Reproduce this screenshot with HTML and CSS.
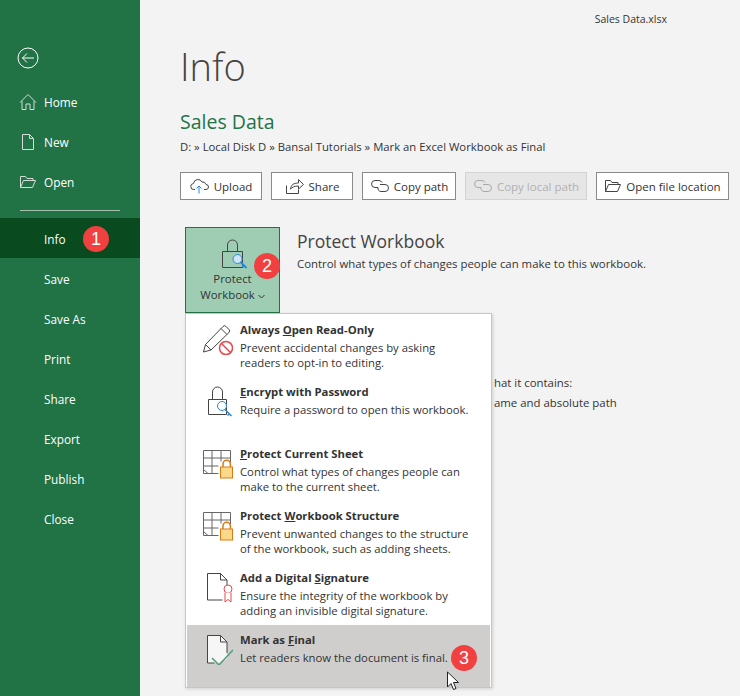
FILE: index.html
```html
<!DOCTYPE html>
<html lang="en">
<head>
<meta charset="utf-8">
<title>Sales Data.xlsx</title>
<link rel="stylesheet" href="styles.css">
</head>
<body>
<div class="app">
  <aside class="side">
    <div class="back">
      <svg width="22" height="22" viewBox="0 0 22 22" fill="none" stroke="#fff" stroke-width="1"><circle cx="11" cy="11" r="10"/><path d="M17 11H5.500M10 6.500 5.500 11l4.500 4.500"/></svg>
    </div>
    <nav class="nav-top">
      <a class="nav"><svg class="nav-ico" width="18" height="18" viewBox="0 0 18 18" fill="none" stroke="#d4ddd7"><path d="M1 9.500 9 1.500l8 8M3 8v8.500h4V11h4v5.500h4V8"/></svg>Home</a>
      <a class="nav"><svg class="nav-ico" width="18" height="18" viewBox="0 0 18 18" fill="none" stroke="#d4ddd7"><path d="M3.500 1.500h7l4 4v11h-11zM10.500 1.500v4h4"/></svg>New</a>
      <a class="nav"><svg class="nav-ico" width="18" height="18" viewBox="0 0 18 18" fill="none" stroke="#d4ddd7"><path d="M1.500 14.500v-11h5l1.500 2h6v2M1.500 14.500h12l3-7h-12z"/></svg>Open</a>
    </nav>
    <div class="sep"></div>
    <a class="nav nav-plain active">Info<span class="badge badge-1">1</span></a>
    <a class="nav nav-plain">Save</a>
    <a class="nav nav-plain">Save As</a>
    <a class="nav nav-plain">Print</a>
    <a class="nav nav-plain">Share</a>
    <a class="nav nav-plain">Export</a>
    <a class="nav nav-plain">Publish</a>
    <a class="nav nav-plain">Close</a>
  </aside>
  <main class="main">
    <div class="file-name">Sales Data.xlsx</div>
    <h1 class="title">Info</h1>
    <h2 class="doc">Sales Data</h2>
    <div class="path">D: » Local Disk D » Bansal Tutorials » Mark an Excel Workbook as Final</div>
    <div class="btns">
      <button class="btn w-upload"><svg width="20" height="16" viewBox="0 0 20 16" fill="none" stroke="#444"><path d="M5 11.500H4a3 3 0 0 1-.5-6 4.500 4.500 0 0 1 8.500-1.500 3.500 3.500 0 0 1 4 2.500 2.500 2.500 0 0 1 0 5h-2"/><path d="M9 15.500V8M6.500 10.500 9 8l2.500 2.500" stroke="#2b88d8"/></svg>Upload</button>
      <button class="btn w-share"><svg width="20" height="16" viewBox="0 0 20 16" fill="none" stroke="#444"><path d="M1.500 7.500v8h12v-4"/><path d="M5.500 11c.5-4 3-6 8-6V1.500l5 5-5 4.500V8c-4 0-6 1-8 3z"/></svg>Share</button>
      <button class="btn w-copy"><svg width="20" height="14" viewBox="0 0 20 14" fill="none" stroke="#444"><path d="M8 8.500H5a3.500 3.500 0 0 1 0-7h4a3.500 3.500 0 0 1 3 2M10 5.500h5a3.500 3.500 0 0 1 0 7h-4a3.500 3.500 0 0 1-3-4"/></svg>Copy path</button>
      <button class="btn w-local off"><svg width="20" height="14" viewBox="0 0 20 14" fill="none" stroke="#aaa"><path d="M8 8.500H5a3.500 3.500 0 0 1 0-7h4a3.500 3.500 0 0 1 3 2M10 5.500h5a3.500 3.500 0 0 1 0 7h-4a3.500 3.500 0 0 1-3-4"/></svg>Copy local path</button>
      <button class="btn w-open"><svg width="18" height="14" viewBox="0 0 18 14" fill="none" stroke="#444"><path d="M1.500 12.500v-11h5l1.500 2h6v2M1.500 12.500h12l3-7h-12z"/></svg>Open file location</button>
    </div>
    <section class="protect">
      <div class="protect-btn">
        <svg class="lock-big" width="28" height="30" viewBox="0 0 28 30" fill="none" stroke="#444"><path d="M6.500 12.500V6a5 5 0 0 1 10 0v6.500M1.500 12.500h20v16h-20z"/><circle cx="16.500" cy="20" r="4.500" fill="#cfe4f4" stroke="#2b88d8"/><path d="M19.500 23l6 6M23 26.500l-1.500 1.500" stroke="#2b88d8" stroke-width="2"/></svg>
        <span class="protect-label">Protect</span>
        <span class="protect-label">Workbook <svg width="7" height="5" viewBox="0 0 7 5" fill="none" stroke="#333"><path d="M.5 1 3.500 4l3-3"/></svg></span>
        <span class="badge badge-2">2</span>
      </div>
      <div class="protect-text">
        <h3>Protect Workbook</h3>
        <p>Control what types of changes people can make to this workbook.</p>
      </div>
    </section>
    <div class="behind">
      <p class="behind-1">hat it contains:</p>
      <p class="behind-2">ame and absolute path</p>
    </div>
    <div class="menu">
      <div class="item">
        <svg class="item-ico" width="32" height="32" viewBox="0 0 32 32" fill="none" stroke="#444"><path d="M2.500 29l2-7.500L22 3.500a2 2 0 0 1 3 0l3 3a2 2 0 0 1 0 3L10 27zM4.500 21.500l5.500 5.500M20 5.500l6 6"/><circle cx="25" cy="25" r="6.500" stroke="#e8484a" stroke-width="1.500" fill="#fff"/><path d="M20.500 20.500l9 9" stroke="#e8484a" stroke-width="1.500"/></svg>
        <div class="item-body"><div class="item-t">Always <u>O</u>pen Read-Only</div><div class="item-d">Prevent accidental changes by asking<br>readers to opt-in to editing.</div></div>
      </div>
      <div class="item">
        <svg class="item-ico" width="32" height="32" viewBox="0 0 32 32" fill="none" stroke="#444"><path d="M11.500 14V7a5 5 0 0 1 10 0v7M7.500 14.500h18v15h-18z"/><circle cx="21" cy="21" r="4.500" fill="#fff" stroke="#2b88d8"/><path d="M24 24.500l6.500 6.500M28 29l-1.500 1.500" stroke="#2b88d8" stroke-width="1.500"/></svg>
        <div class="item-body"><div class="item-t"><u>E</u>ncrypt with Password</div><div class="item-d">Require a password to open this workbook.</div></div>
      </div>
      <div class="item">
        <svg class="item-ico" width="32" height="32" viewBox="0 0 32 32" fill="none" stroke="#666"><path d="M2.500 3.500h27v12M2.500 3.500v23h15M2.500 11h27M2.500 19h15M11 3.500v23M20 3.500v11M7 26.500l-4.500-4"/><path d="M22 20v-3a3.700 3.700 0 0 1 7.400 0v3" stroke="#d97a14" stroke-width="1.500"/><rect x="19.500" y="20" width="12" height="11" fill="#fbd98a" stroke="#d97a14"/></svg>
        <div class="item-body"><div class="item-t"><u>P</u>rotect Current Sheet</div><div class="item-d">Control what types of changes people can<br>make to the current sheet.</div></div>
      </div>
      <div class="item">
        <svg class="item-ico" width="32" height="32" viewBox="0 0 32 32" fill="none" stroke="#666"><path d="M2.500 3.500h27v12M2.500 3.500v23h15M2.500 11h27M2.500 19h15M11 3.500v23M20 3.500v11M7 26.500l-4.500-4"/><path d="M22 20v-3a3.700 3.700 0 0 1 7.400 0v3" stroke="#d97a14" stroke-width="1.500"/><rect x="19.500" y="20" width="12" height="11" fill="#fbd98a" stroke="#d97a14"/></svg>
        <div class="item-body"><div class="item-t">Protect <u>W</u>orkbook Structure</div><div class="item-d">Prevent unwanted changes to the structure<br>of the workbook, such as adding sheets.</div></div>
      </div>
      <div class="item">
        <svg class="item-ico" width="32" height="32" viewBox="0 0 32 32" fill="none" stroke="#444"><path d="M6.500 2.500h13l6.500 6.500v5M6.500 2.500v26.500h15M19.500 2.500v6.500h6.500"/><circle cx="27" cy="18" r="4" stroke="#e8484a" fill="#fff"/><path d="M24 21.500V31l3-2.500 3 2.500v-9.500" stroke="#e8484a" fill="#fff"/></svg>
        <div class="item-body"><div class="item-t">Add a Digital <u>S</u>ignature</div><div class="item-d">Ensure the integrity of the workbook by<br>adding an invisible digital signature.</div></div>
      </div>
      <div class="item hot">
        <svg class="item-ico" width="32" height="32" viewBox="0 0 32 32" fill="none" stroke="#444"><path d="M6.500 2.500h13l6.500 6.500v17l-8 4H6.500z" fill="#f6f6f6" stroke="none"/><path d="M6.500 2.500h13l6.500 6.500v11M6.500 2.500v27.500h7M19.500 2.500v6.500h6.500"/><path d="M11 25l7 7 14-15" stroke="#4f9d77" stroke-width="1.500"/></svg>
        <div class="item-body"><div class="item-t">Mark as <u>F</u>inal</div><div class="item-d">Let readers know the document is final.</div></div>
        <span class="badge badge-3">3</span>
      </div>
      <svg class="cursor" width="14" height="21" viewBox="0 0 14 21" fill="#fff" stroke="#222"><path d="M1.500 1v15l3.500-3.500 2.500 6 2.500-1-2.500-6h5z"/></svg>
    </div>
  </main>
</div>
</body>
</html>
```
FILE: styles.css
```css
* { box-sizing: border-box; }
html, body { margin: 0; height: 100%; overflow: hidden; }
body { font-family: "Open Sans", "Noto Sans", sans-serif; font-size: 11.4px; color: #333; background: #f3f3f3; }
.app { display: flex; width: 740px; height: 696px; }
.side { width: 140px; flex: none; background: #217346; color: #fff; padding-top: 47px; display: flex; flex-direction: column; }
.back { height: 22px; padding-left: 17px; margin-bottom: 13px; display: flex; }
.nav-top { display: flex; flex-direction: column; }
.nav { height: 40px; display: flex; align-items: center; color: #fff; font-size: 11.8px; position: relative; }
.nav-ico { margin-left: 19px; margin-right: 7px; flex: none; }
.nav-plain { padding: 1px 0 0 44px; }
.sep { height: 1px; background: #a4bfae; margin: 8px 20px 7px; }
.active { background: #0a4a1f; }
.badge { position: absolute; width: 26px; height: 26px; border-radius: 50%; background: #f0403f; color: #fff; font-size: 18px; line-height: 26px; text-align: center; font-family: "Liberation Sans", sans-serif; }
.badge-1 { left: 83px; top: 8px; }
.badge-2 { right: -1px; top: 25px; }
.badge-3 { left: 264px; top: 20px; }
.main { flex: 1; position: relative; padding: 11px 0 0 40px; min-width: 0; }
.file-name { text-align: right; padding-right: 73px; height: 16px; line-height: 16px; font-size: 10.5px; color: #333; }
.title { margin: 12px 0 0; font-weight: 300; font-size: 38px; line-height: 54px; color: #444; }
.doc { margin: 16px 0 0; font-weight: 400; font-size: 19.5px; line-height: 26px; color: #217346; }
.path { margin-top: 4px; font-size: 11.3px; line-height: 16px; color: #333; white-space: nowrap; }
.btns { display: flex; gap: 9px; margin-top: 17px; }
.btn { height: 28px; padding: 0; border: 1px solid #8a8a8a; background: #fff; color: #333; font: inherit; font-size: 11.5px; display: flex; align-items: center; justify-content: center; gap: 4px; white-space: nowrap; }
.off { background: #e6e6e6; border-color: #d4d4d4; color: #b1b1b1; }
.w-upload, .w-share { width: 82px; }
.w-copy { width: 94px; }
.w-local { width: 122px; }
.w-open { width: 133px; }
.protect { display: flex; margin: 27px 0 0 5px; }
.protect-btn { position: relative; width: 95px; height: 86px; flex: none; background: #9fcdb3; border: 1px solid #217346; display: flex; flex-direction: column; align-items: center; padding-top: 11px; }
.lock-big { margin-left: 4px; margin-bottom: 2px; }
.protect-label { font-size: 11.4px; line-height: 16px; color: #333; white-space: nowrap; }
.protect-text { margin-left: 17px; }
.protect-text h3 { margin: 2px 0 0; font-weight: 400; font-size: 17.5px; line-height: 24px; color: #444; }
.protect-text p { margin: 3px 0 0; white-space: nowrap; font-size: 11.4px; }
.behind { margin: 60px 0 0 314px; font-size: 11.4px; white-space: nowrap; }
.behind p { margin: 0; line-height: 20px; }
.menu { position: absolute; left: 45px; top: 313px; width: 307px; height: 375px; padding: 1px; background: #fff; border: 1px solid #c6c6c6; box-shadow: 1px 1px 3px rgba(0,0,0,.15); }
.item { height: 62px; display: flex; position: relative; padding: 7px 0 0 14px; }
.hot { background: #d0cecd; }
.item-ico { flex: none; margin: 1px 7px 0 0; }
.item-body { min-width: 0; }
.item-t { font-weight: 700; font-size: 11.3px; line-height: 15px; color: #333; white-space: nowrap; }
.item-d { font-size: 11.3px; line-height: 15px; margin-top: 3px; color: #333; white-space: nowrap; }
.cursor { position: absolute; left: 260px; top: 357px; }
```
